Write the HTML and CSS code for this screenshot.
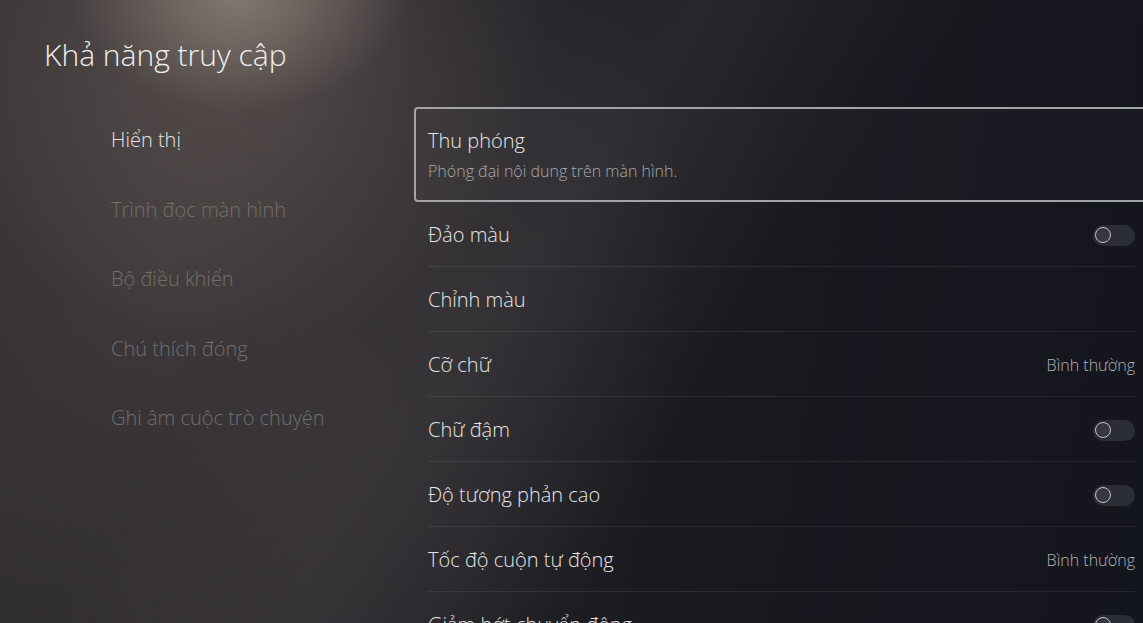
FILE: index.html
```html
<!DOCTYPE html>
<html lang="vi">
<head>
  <meta charset="UTF-8" />
  <title>Khả năng truy cập</title>
  <meta name="viewport" content="width=device-width, initial-scale=1" />
  <link rel="stylesheet" href="styles.css">
</head>
<body>
  <div class="screen">
    <h1 class="page-title">Khả năng truy cập</h1>

    <div class="main">
      <nav class="side-nav">
        <div class="nav-item active">Hiển thị</div>
        <div class="nav-item">Trình đọc màn hình</div>
        <div class="nav-item">Bộ điều khiển</div>
        <div class="nav-item">Chú thích đóng</div>
        <div class="nav-item">Ghi âm cuộc trò chuyện</div>
      </nav>

      <div class="settings-list">
        <div class="setting selected">
          <div class="setting-name">Thu phóng</div>
          <div class="setting-desc">Phóng đại nội dung trên màn hình.</div>
        </div>
        <div class="setting row">
          <span class="setting-name">Đảo màu</span>
          <span class="toggle"><span class="knob"></span></span>
        </div>
        <div class="setting row">
          <span class="setting-name">Chỉnh màu</span>
        </div>
        <div class="setting row">
          <span class="setting-name">Cỡ chữ</span>
          <span class="value">Bình thường</span>
        </div>
        <div class="setting row">
          <span class="setting-name">Chữ đậm</span>
          <span class="toggle"><span class="knob"></span></span>
        </div>
        <div class="setting row">
          <span class="setting-name">Độ tương phản cao</span>
          <span class="toggle"><span class="knob"></span></span>
        </div>
        <div class="setting row">
          <span class="setting-name">Tốc độ cuộn tự động</span>
          <span class="value">Bình thường</span>
        </div>
        <div class="setting row">
          <span class="setting-name">Giảm bớt chuyển động</span>
          <span class="toggle"><span class="knob"></span></span>
        </div>
      </div>
    </div>
  </div>
</body>
</html>
```

FILE: styles.css
```css
/* ——— PS5 style settings screen ——— */
html, body { margin: 0; height: 100%; }
body {
  font-family: "Open Sans", "Noto Sans", sans-serif;
  font-weight: 300;
  color: #e6e6e6;
  overflow: hidden;
  background: #16181f;
}
.screen {
  width: 1143px; height: 623px; overflow: hidden;
  background:
    radial-gradient(ellipse 170px 120px at 240px -10px, rgba(175,160,150,0.55), transparent),
    radial-gradient(ellipse 420px 420px at 230px 40px, rgba(110,98,92,0.55), transparent 75%),
    linear-gradient(125deg, transparent 30%, rgba(90,84,84,0.2) 45%, transparent 62%),
    radial-gradient(ellipse 640px 760px at 170px 260px, rgba(70,64,64,0.75), transparent 80%),
    linear-gradient(100deg, #2c2a2e 0%, #222227 40%, #18191f 65%, #14161d 100%);
}
.page-title {
  margin: 0; padding: 36px 0 0 44px;
  font-size: 30px; line-height: 38px; font-weight: 300; color: #f0f0f0;
}

.main { display: flex; margin-top: 33px; }
.side-nav { width: 303px; padding-left: 111px; flex-shrink: 0; }
.nav-item {
  height: 69.5px; display: flex; align-items: center;
  font-size: 20px; color: #716e6e; margin-top: -2px; margin-bottom: 2px;
}
.nav-item.active { color: #e4e4e4; }

.settings-list { width: 735px; flex-shrink: 0; }
.setting-name { font-size: 20px; line-height: 26px; color: #e6e6e6; }
.selected {
  height: 95px; box-sizing: border-box;
  border: 2px solid #a3a3a8; border-radius: 4px;
  padding: 19px 12px 0;
  background: rgba(255,255,255,0.02);
}
.setting-desc { margin-top: 7px; font-size: 16px; line-height: 20px; color: #a9a9ad; }
.row {
  height: 65px; box-sizing: border-box; margin: 0 14px;
  padding-top: 2px;
  display: flex; align-items: center; justify-content: space-between;
  border-bottom: 1px solid rgba(255,255,255,0.08);
}
.value { font-size: 16px; color: #b3b3b7; }
.toggle {
  width: 42px; height: 21px; border-radius: 11px; background: #2b2e36;
  display: flex; align-items: center; padding-left: 2px; box-sizing: border-box;
}
.knob {
  width: 16px; height: 16px; border-radius: 50%; box-sizing: border-box;
  border: 1.5px solid #c2c2c6; background: #353841;
}
```
